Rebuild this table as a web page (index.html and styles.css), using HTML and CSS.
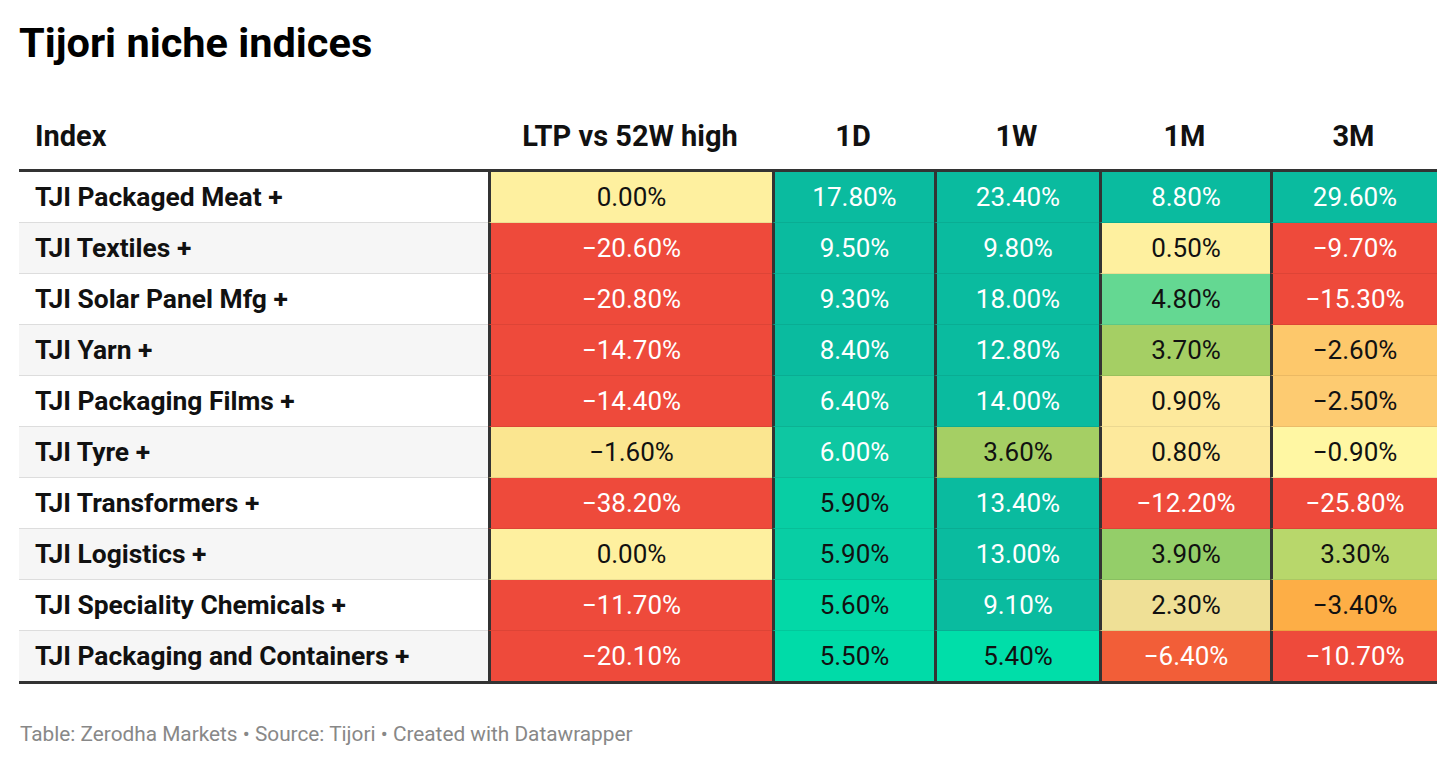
FILE: index.html
```html
<!DOCTYPE html>
<html lang="en">
<head>
<meta charset="utf-8">
<title>Tijori niche indices</title>
<link rel="stylesheet" href="styles.css">
</head>
<body>
<div class="page">
  <h1 class="title">Tijori niche indices</h1>
  <table class="tbl">
    <colgroup>
      <col class="w-idx"><col class="w-ltp"><col class="w-1d"><col class="w-1w"><col class="w-1m"><col class="w-3m">
    </colgroup>
    <thead>
      <tr>
        <th class="h-idx">Index</th>
        <th>LTP vs 52W high</th>
        <th>1D</th>
        <th>1W</th>
        <th>1M</th>
        <th>3M</th>
      </tr>
    </thead>
    <tbody>
      <tr>
        <td class="idx">TJI Packaged Meat +</td>
        <td class="v yel0">0.00%</td>
        <td class="v teal">17.80%</td>
        <td class="v teal">23.40%</td>
        <td class="v teal">8.80%</td>
        <td class="v teal">29.60%</td>
      </tr>
      <tr class="alt">
        <td class="idx">TJI Textiles +</td>
        <td class="v red">−20.60%</td>
        <td class="v teal">9.50%</td>
        <td class="v teal">9.80%</td>
        <td class="v yel0">0.50%</td>
        <td class="v red">−9.70%</td>
      </tr>
      <tr>
        <td class="idx">TJI Solar Panel Mfg +</td>
        <td class="v red">−20.80%</td>
        <td class="v teal">9.30%</td>
        <td class="v teal">18.00%</td>
        <td class="v grn48">4.80%</td>
        <td class="v red">−15.30%</td>
      </tr>
      <tr class="alt">
        <td class="idx">TJI Yarn +</td>
        <td class="v red">−14.70%</td>
        <td class="v teal">8.40%</td>
        <td class="v teal">12.80%</td>
        <td class="v olive">3.70%</td>
        <td class="v ora26">−2.60%</td>
      </tr>
      <tr>
        <td class="idx">TJI Packaging Films +</td>
        <td class="v red">−14.40%</td>
        <td class="v teal64">6.40%</td>
        <td class="v teal">14.00%</td>
        <td class="v yel09">0.90%</td>
        <td class="v ora25">−2.50%</td>
      </tr>
      <tr class="alt">
        <td class="idx">TJI Tyre +</td>
        <td class="v yel16">−1.60%</td>
        <td class="v teal60">6.00%</td>
        <td class="v olive">3.60%</td>
        <td class="v yel09">0.80%</td>
        <td class="v yel_09">−0.90%</td>
      </tr>
      <tr>
        <td class="idx">TJI Transformers +</td>
        <td class="v red">−38.20%</td>
        <td class="v mint59">5.90%</td>
        <td class="v teal">13.40%</td>
        <td class="v red">−12.20%</td>
        <td class="v red">−25.80%</td>
      </tr>
      <tr class="alt">
        <td class="idx">TJI Logistics +</td>
        <td class="v yel0">0.00%</td>
        <td class="v mint59">5.90%</td>
        <td class="v teal">13.00%</td>
        <td class="v grn39">3.90%</td>
        <td class="v grn33">3.30%</td>
      </tr>
      <tr>
        <td class="idx">TJI Speciality Chemicals +</td>
        <td class="v red">−11.70%</td>
        <td class="v mint56">5.60%</td>
        <td class="v teal">9.10%</td>
        <td class="v beige">2.30%</td>
        <td class="v ora34">−3.40%</td>
      </tr>
      <tr class="alt last">
        <td class="idx">TJI Packaging and Containers +</td>
        <td class="v red">−20.10%</td>
        <td class="v mint55">5.50%</td>
        <td class="v mint54">5.40%</td>
        <td class="v red64">−6.40%</td>
        <td class="v red">−10.70%</td>
      </tr>
    </tbody>
  </table>
  <p class="foot">Table: Zerodha Markets • Source: Tijori • Created with Datawrapper</p>
</div>
</body>
</html>
```
FILE: styles.css
```css
html, body {
  margin: 0;
  padding: 0;
  background: #ffffff;
}
body {
  font-family: Roboto, "Liberation Sans", sans-serif;
  color: #181818;
}
.page {
  padding: 18px 19px 0 19px;
}
.title {
  margin: 0;
  font-size: 41.5px;
  line-height: 50px;
  font-weight: 700;
  color: #000;
}
.tbl {
  margin-top: 50px;
  width: 1418px;
  border-collapse: separate;
  border-spacing: 0;
  table-layout: fixed;
}
.w-idx { width: 469px; }
.w-ltp { width: 284px; }
.w-1d { width: 162px; }
.w-1w { width: 165px; }
.w-1m { width: 171px; }
.w-3m { width: 167px; }

.tbl th {
  font-size: 29px;
  font-weight: 700;
  line-height: 34px;
  color: #111;
  text-align: center;
  padding: 1px 4px 16px 4px;
  border-bottom: 3px solid #333;
  vertical-align: bottom;
}
.tbl th.h-idx {
  text-align: left;
  padding-left: 16px;
}
.tbl td {
  padding: 0 4px;
  font-size: 26px;
  line-height: 30px;
  border-bottom: 1px solid #dddddd;
  vertical-align: middle;
  box-sizing: border-box;
}
.tbl td.idx {
  font-size: 26.4px;
  font-weight: 700;
  color: #111;
  padding-left: 16px;
  white-space: nowrap;
}
.tbl tr.alt td.idx {
  background: #f6f6f6;
}
.tbl td.v {
  text-align: center;
  border-left: 3px solid #333;
  border-bottom: 1px solid rgba(0, 0, 0, 0.07);
  color: #111;
}
.tbl tr td {
  height: 51px;
}
.tbl tr.last td {
  height: 53px;
  border-bottom: 3px solid #333;
}

/* heat colours */
.teal { background: #0abb9f; color: #fff !important; }
.teal64 { background: #0dc09f; color: #fff !important; }
.teal60 { background: #0ec7a2; color: #fff !important; }
.mint59 { background: #08cea4; }
.mint56 { background: #03d8a7; }
.mint55 { background: #00dba8; }
.mint54 { background: #00dea9; }
.red { background: #ee4a3b; color: #fff !important; }
.red64 { background: #f25e38; color: #fff !important; }
.yel0 { background: #fef09f; }
.yel16 { background: #fbe690; }
.yel09 { background: #fde99c; }
.yel_09 { background: #fff7a3; }
.grn48 { background: #64d892; }
.olive { background: #a5cf64; }
.grn39 { background: #94ce69; }
.grn33 { background: #b8d76b; }
.beige { background: #efe096; }
.ora26 { background: #fdc86b; }
.ora25 { background: #fdcb71; }
.ora34 { background: #fdae46; }

.foot {
  margin: 38px 0 0 1px;
  font-size: 20.8px;
  line-height: 24px;
  color: #888;
}
```
